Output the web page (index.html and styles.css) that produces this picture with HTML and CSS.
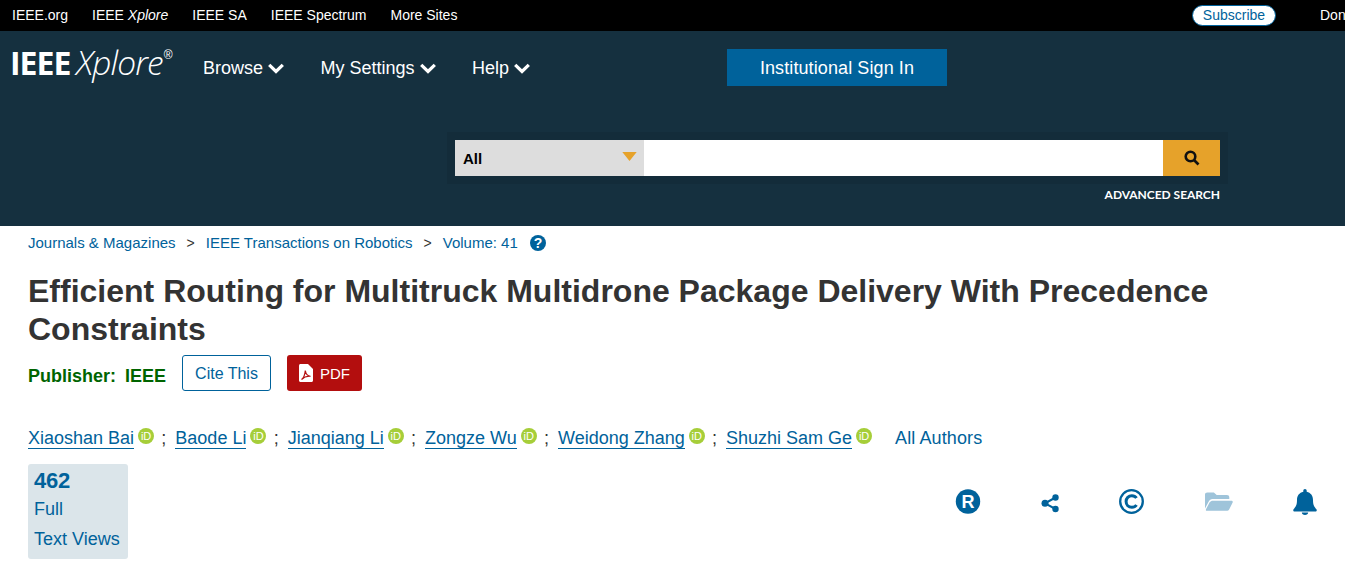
FILE: index.html
```html
<!DOCTYPE html>
<html lang="en">
<head>
<meta charset="utf-8">
<title>Efficient Routing for Multitruck Multidrone Package Delivery With Precedence Constraints</title>
<link rel="stylesheet" href="styles.css">
</head>
<body>
<div class="topbar">
  <nav class="topnav">
    <a>IEEE.org</a>
    <a>IEEE <i>Xplore</i></a>
    <a>IEEE SA</a>
    <a>IEEE Spectrum</a>
    <a>More Sites</a>
  </nav>
  <div class="topright">
    <a class="subscribe">Subscribe</a>
    <a class="donate">Donate</a>
  </div>
</div>
<header class="header">
  <div class="headrow">
    <div class="logo"><b>IEEE</b><i>Xplore</i><sup>®</sup></div>
    <nav class="mainnav">
      <a>Browse <svg class="chev" viewBox="0 0 16 11"><path d="M1.200 1.800 8 8.500 14.800 1.800" /></svg></a>
      <a>My Settings <svg class="chev" viewBox="0 0 16 11"><path d="M1.200 1.800 8 8.500 14.800 1.800" /></svg></a>
      <a>Help <svg class="chev" viewBox="0 0 16 11"><path d="M1.200 1.800 8 8.500 14.800 1.800" /></svg></a>
    </nav>
    <a class="signin">Institutional Sign In</a>
  </div>
  <div class="searchwrap">
    <div class="search">
      <div class="scope"><span>All</span><svg class="caret" viewBox="0 0 16 10"><path d="M0 0h16L8 10z"/></svg></div>
      <div class="query"></div>
      <div class="go"><svg viewBox="0 0 16 16" class="mag"><circle cx="6.500" cy="6.500" r="4.800"/><path d="M10 10l4.500 4.500"/></svg></div>
    </div>
    <a class="advanced">ADVANCED SEARCH</a>
  </div>
</header>
<main class="main">
  <div class="crumbs">
    <a>Journals &amp; Magazines</a><span class="sep">&gt;</span>
    <a>IEEE Transactions on Robotics</a><span class="sep">&gt;</span>
    <a>Volume: 41</a>
    <svg class="help" viewBox="0 0 16 16"><circle cx="8" cy="8" r="8"/><text x="8" y="13" text-anchor="middle" class="helpq">?</text></svg>
  </div>
  <h1 class="title">Efficient Routing for Multitruck Multidrone Package Delivery With Precedence Constraints</h1>
  <div class="pubrow">
    <div class="publisher">Publisher:&nbsp; IEEE</div>
    <a class="cite">Cite This</a>
    <a class="pdf"><svg class="pdficon" viewBox="0 0 14 18"><path class="sheet" d="M0 1.500C0 .7.700 0 1.500 0H9l5 5v11.500c0 .8-.7 1.500-1.500 1.500h-11C.7 18 0 17.300 0 16.500z"/><path class="acro" d="M2.500 15.500C4.500 14 6 10 6.300 6.500 6.800 10 8.500 12 11.500 12.300 8.500 12 5 13 2.500 15.500z"/></svg>PDF</a>
  </div>
  <div class="authors">
    <a class="author">Xiaoshan Bai</a><span class="orcid">iD</span><span class="semi">;</span>
    <a class="author">Baode Li</a><span class="orcid">iD</span><span class="semi">;</span>
    <a class="author">Jianqiang Li</a><span class="orcid">iD</span><span class="semi">;</span>
    <a class="author">Zongze Wu</a><span class="orcid">iD</span><span class="semi">;</span>
    <a class="author">Weidong Zhang</a><span class="orcid">iD</span><span class="semi">;</span>
    <a class="author">Shuzhi Sam Ge</a><span class="orcid">iD</span>
    <a class="allauthors">All Authors</a>
  </div>
  <div class="metrics">
    <div class="views">
      <div class="count">462</div>
      <div class="vline">Full</div>
      <div class="vline">Text Views</div>
    </div>
    <div class="tools">
      <svg class="tool" viewBox="0 0 26 26"><circle cx="13" cy="12.500" r="12.200"/><text x="13" y="18.500" text-anchor="middle" class="rmark">R</text></svg>
      <svg class="tool" viewBox="0 0 26 26"><path class="shareline" d="M18.500 8.500 8 14.300 18.500 20"/><circle cx="18.500" cy="8.500" r="3.200"/><circle cx="8" cy="14.300" r="3.500"/><circle cx="18.500" cy="20" r="3.200"/></svg>
      <svg class="tool" viewBox="0 0 26 26"><circle class="ring" cx="12.500" cy="12.500" r="11.300"/><path class="cmark" d="M17.500 9C16.400 7.400 14.700 6.700 12.900 6.700 9.500 6.700 7.100 9.200 7.100 12.500s2.400 5.800 5.800 5.800c1.800 0 3.500-.7 4.600-2.300"/></svg>
      <svg class="tool folder" viewBox="0 0 30 22" preserveAspectRatio="none"><path d="M0 3c0-1.500 1-2.500 2.500-2.500h7L12.500 3.500h11C25 3.500 26 4.500 26 6v2H8C6 8 5 9 4 11L0 19z"/><path d="M8.500 10H28c1.500 0 2.200 1 1.500 2.500L26 20c-.6 1.200-1.500 1.800-3 1.800H2.500C1 21.800.6 21 1.200 19.800L5 12c.8-1.400 2-2 3.500-2z"/></svg>
      <svg class="tool" viewBox="0 0 26 26"><path d="M13 0c1 0 1.700.8 1.700 1.800v.9c4 .9 6.300 4 6.300 8.300 0 5.500 1.500 7 3.400 9.200.8.900.2 2.300-1 2.300H2.600c-1.200 0-1.800-1.400-1-2.300C3.500 18 5 16.500 5 11c0-4.300 2.300-7.400 6.300-8.300v-.9C11.300.8 12 0 13 0z"/><path d="M9.800 23.500h6.400c0 1.500-1.400 2.500-3.200 2.500s-3.200-1-3.200-2.500z"/></svg>
    </div>
  </div>
</main>
</body>
</html>
```
FILE: styles.css
```css
* { box-sizing: border-box; }
html, body { margin: 0; padding: 0; height: 579px; overflow: hidden; }
body { font-family: "Liberation Sans", Arial, sans-serif; background: #fff; color: #333; width: 1345px; }

.topbar { height: 31px; background: #000; display: flex; justify-content: space-between; align-items: center; padding-left: 12px; overflow: hidden; }
.topnav { display: flex; gap: 24px; font-size: 14px; color: #fff; padding-bottom: 2px; }
.topright { display: flex; align-items: center; gap: 44px; margin-right: -25px; width: 178px; flex: none; }
.subscribe { display: block; flex: none; width: 84px; height: 21px; line-height: 19px; text-align: center; background: #fff; color: #00629b; border: 1px solid #00629b; border-radius: 11px; font-size: 14px; margin-bottom: 1px; }
.donate { color: #fff; font-size: 14px; white-space: nowrap; padding-bottom: 2px; }

.header { height: 195px; background: #15303f; display: flex; flex-direction: column; }
.headrow { display: flex; align-items: flex-start; height: 109px; padding: 17px 0 0 10px; color: #fff; }
.logo { width: 193px; height: 37px; display: flex; align-items: baseline; color: #fff; line-height: 28px; flex: none; }
.logo b { font-family: "Open Sans", sans-serif; font-size: 32px; font-weight: 700; letter-spacing: -1px; margin-right: 6px; }
.logo i { font-family: "Open Sans", sans-serif; font-size: 33.500px; font-weight: 300; letter-spacing: -.900px; }
.logo sup { font-size: 12px; line-height: 1; margin-left: 1px; align-self: flex-start; margin-top: 1px; }
.mainnav { display: flex; gap: 36.500px; font-size: 18px; padding-top: 10px; line-height: 21px; width: 524px; flex: none; color: #fff; }
.chev { width: 16px; height: 11px; fill: none; stroke: #fff; stroke-width: 3.200; }
.signin { display: block; width: 220px; height: 37px; line-height: 38px; margin-top: 1px; text-align: center; background: #00629b; font-size: 18px; letter-spacing: .1px; color: #fff; }

.searchwrap { width: 765px; margin-left: 455px; }
.search { display: flex; height: 36px; box-shadow: 0 0 0 8px #132c3a; }
.scope { width: 189px; background: #ddd; color: #000; font-size: 15px; font-weight: 700; display: flex; justify-content: space-between; align-items: center; padding: 0 7px 0 8px; }
.caret { width: 15px; height: 9px; fill: #e6a22a; margin-top: -3px; }
.query { flex: 1; background: #fff; }
.go { width: 57px; background: #e6a22a; display: flex; align-items: center; justify-content: center; }
.mag { width: 16px; height: 16px; fill: none; stroke: #111; stroke-width: 2.600; }
.advanced { display: block; text-align: right; margin-top: 11px; font-family: Lato, sans-serif; font-weight: 700; font-size: 12px; letter-spacing: -.03px; line-height: 15px; color: #fff; }

.main { padding: 0 0 0 28px; color: #00629b; }
.crumbs { display: flex; align-items: center; height: 34px; font-size: 15px; padding-bottom: 1px; }
.sep { color: #333; margin: 0 11px; font-size: 14px; }
.help { width: 16px; height: 16px; margin-left: 12px; fill: #00629b; }
.helpq { fill: #fff; font-family: "Liberation Sans", sans-serif; font-weight: 700; font-size: 14px; }
.title { margin: 12px 0 0; width: 1240px; font-size: 32px; line-height: 38px; font-weight: 700; color: #333; }
.pubrow { display: flex; align-items: center; margin-top: 7px; height: 36px; }
.publisher { width: 154px; font-size: 18px; font-weight: 700; color: #006400; padding-top: 7px; word-spacing: -.5px; }
.cite { display: block; width: 89px; height: 36px; line-height: 35px; text-align: center; border: 1px solid #00629b; border-radius: 3px; font-size: 16px; color: #00629b; }
.pdf { display: flex; align-items: center; gap: 7px; padding-left: 12px; width: 75px; height: 36px; margin-left: 16px; background: #b30e0e; border-radius: 3px; color: #fff; font-size: 15px; padding-top: 1px; }
.pdficon { width: 14px; height: 18px; flex: none; margin-top: -2px; }
.sheet { fill: #fff; }
.acro { fill: none; stroke: #b30e0e; stroke-width: 1.200; }
.authors { display: flex; align-items: center; margin-top: 35px; height: 24px; font-size: 18px; }
.author { color: #00629b; border-bottom: 1px solid #00629b; line-height: 20px; }
.orcid { width: 16px; height: 16px; margin: -4px 0 0 4px; border-radius: 50%; background: #a6ce39; color: #fff; font-size: 11px; line-height: 16px; text-align: center; }
.semi { color: #333; margin: 0 9px 0 7.250px; font-size: 18px; }
.allauthors { margin-left: 23px; letter-spacing: .1px; }
.metrics { display: flex; margin-top: 14px; }
.views { width: 100px; height: 95px; padding: 3px 6px 0; background: #dbe5ea; border-radius: 3px; font-size: 18px; }
.count { font-size: 22px; font-weight: 700; line-height: 27px; letter-spacing: -.2px; }
.vline { line-height: 30px; }
.tools { position: relative; display: flex; }
.tool { position: absolute; width: 26px; height: 26px; top: 25px; fill: #00629b; }
.tool:nth-child(1) { left: 827px; }
.tool:nth-child(2) { left: 909px; }
.tool:nth-child(3) { left: 991px; }
.tool:nth-child(4) { left: 1077px; width: 28px; height: 19px; top: 28px; fill: #9fc4da; }
.tool:nth-child(5) { left: 1164px; }
.rmark { fill: #fff; font-family: "Liberation Sans", sans-serif; font-weight: 700; font-size: 18px; }
.shareline { fill: none; stroke: #00629b; stroke-width: 2; }
.ring, .cmark { fill: none; stroke: #00629b; stroke-width: 2.300; }
.cmark { stroke-width: 3; }
```
